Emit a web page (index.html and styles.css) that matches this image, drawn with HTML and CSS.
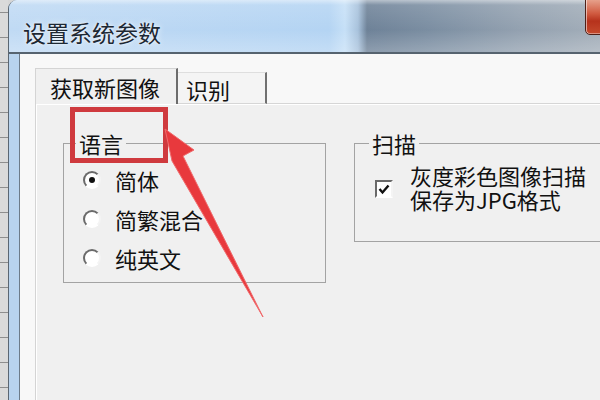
FILE: index.html
```html
<!DOCTYPE html>
<html lang="zh-CN">
<head>
<meta charset="utf-8">
<title>设置系统参数</title>
<link rel="stylesheet" href="styles.css">
</head>
<body>
<div class="screen">
  <div class="bgstrip"></div>
  <div class="window">
    <div class="titlebar">
      <span class="title">设置系统参数</span>
      <div class="close"></div>
    </div>
    <div class="frame">
      <div class="client">
        <div class="tabs">
          <div class="tab active">获取新图像</div>
          <div class="tab normal">识别</div>
          <div class="tab-fill"></div>
        </div>
        <div class="panel">
          <fieldset class="group lang">
            <legend>语言</legend>
            <div class="opt"><span class="radio on"></span>简体</div>
            <div class="opt"><span class="radio"></span>简繁混合</div>
            <div class="opt"><span class="radio"></span>纯英文</div>
          </fieldset>
          <fieldset class="group scan">
            <legend>扫描</legend>
            <div class="check-row">
              <span class="checkbox"><svg viewBox="0 0 14 14" width="14" height="14"><polyline points="2.5,7 5.5,10.5 11.5,3.5" fill="none" stroke="#111" stroke-width="2.4"/></svg></span>
              <span class="check-text"><span class="line">灰度彩色图像扫描</span><span class="line">保存为JPG格式</span></span>
            </div>
          </fieldset>
        </div>
      </div>
    </div>
  </div>
  <svg class="annot" viewBox="0 0 600 400" width="600" height="400">
    <rect x="72.5" y="109.5" width="93" height="51" fill="none" stroke="#cf3a3e" stroke-width="5"/>
    <polygon points="165,129 194,150 183,156 263,317 172,161" fill="#e8393d" stroke="#f06a6c" stroke-width="1" stroke-linejoin="round"/>
  </svg>
</div>
</body>
</html>
```

FILE: styles.css
```css
* { box-sizing: border-box; }
html, body { margin: 0; padding: 0; }
body {
  width: 600px;
  height: 400px;
  overflow: hidden;
  background: #d6d6d6;
  font-family: "Noto Sans CJK SC", "Noto Sans", sans-serif;
  color: #111;
}
.screen {
  position: relative;
  width: 600px;
  height: 400px;
  overflow: hidden;
  display: flex;
}
.bgstrip {
  flex: 0 0 8px;
  background: repeating-linear-gradient(180deg, #dadada 0 12px, #8e8e8e 12px 13px, #dadada 13px 25px);
}
.window {
  flex: 0 0 640px;
  height: 420px;
  display: flex;
  flex-direction: column;
  border-top-left-radius: 9px;
  border-left: 1px solid #5a6672;
  overflow: hidden;
  background: #b8d3ee;
}
.titlebar {
  position: relative;
  flex: none;
  height: 54px;
  display: flex;
  align-items: center;
  padding: 12px 0 0 14px;
  border-bottom: 2px solid #56636f;
  background:
    linear-gradient(180deg, rgba(255,255,255,.5) 0, rgba(255,255,255,.12) 5px, rgba(255,255,255,0) 30px, rgba(255,255,255,.2) 50px),
    linear-gradient(90deg, #c0daf4 0, #b4d4f3 320px, #c6e0f7 336px, #a8c2dc 349px, #6e8298 358px, #7b8ea2 420px, #93a1b0 510px, #a3aeb9 590px);
}
.title {
  font-size: 23px;
  line-height: 1;
  color: #1d2834;
  text-shadow: 0 0 6px rgba(255,255,255,.9), 0 0 2px rgba(255,255,255,.8);
}
.close {
  position: absolute;
  top: -1px;
  left: 576px;
  width: 60px;
  height: 36px;
  border: 1px solid #4e2018;
  border-bottom-left-radius: 5px;
  background: linear-gradient(180deg, #e6a08a 0, #d05a40 40%, #b6321c 62%, #c44a2d 100%);
  box-shadow: inset 1px 0 0 rgba(255,255,255,.55), inset 0 -1px 0 rgba(255,255,255,.4);
}
.frame {
  flex: 1;
  display: flex;
  background: #b8d3ee;
  padding-left: 10px;
}
.client {
  flex: 1;
  display: flex;
  flex-direction: column;
  background: #f8f8f8;
  border-left: 1px solid #6d7b89;
  padding: 14px 0 0 15px;
}
.tabs {
  flex: none;
  height: 36px;
  display: flex;
  align-items: flex-end;
}
.tab {
  font-size: 22px;
  line-height: 1;
  color: #111;
  display: flex;
  align-items: center;
}
.tab.active {
  width: 143px;
  height: 36px;
  border-top: 1px solid #d4d4d4;
  border-left: 1px solid #d4d4d4;
  border-right: 2px solid #6c6c6c;
  padding-left: 14px;
  background: #f0f0f0;
}
.tab.normal {
  width: 89px;
  height: 32px;
  border-top: 1px solid #dedede;
  border-right: 2px solid #707070;
  border-bottom: 1px solid #d6d6d6;
  padding-left: 8px;
  padding-top: 2px;
  background: #f4f4f4;
}
.tab-fill {
  flex: 1;
  height: 1px;
  background: #d6d6d6;
}
.panel {
  flex: 1;
  display: flex;
  align-items: flex-start;
  background: #f0f0f0;
  border-left: 1px solid #d4d4d4;
  box-shadow: inset 1px 1px 0 #fff;
  padding: 26px 0 0 27px;
}
fieldset.group {
  margin: 0;
  min-width: 0;
  flex: none;
  border: 1px solid #a3a3a3;
}
.group legend {
  font-size: 22px;
  line-height: 26px;
  padding: 0 3px;
  color: #111;
}
fieldset.lang {
  width: 263px;
  padding: 4px 0 5px 19px;
}
.lang legend { margin-left: -7px; }
.opt {
  display: flex;
  align-items: center;
  gap: 14px;
  height: 39px;
  font-size: 22px;
  line-height: 1;
}
.radio {
  position: relative;
  flex: none;
  width: 18px;
  height: 18px;
  border-radius: 50%;
  background: #fff;
  border: 2px solid;
  border-color: #6a6a6a #f4f4f4 #fff #6a6a6a;
}
.radio.on::after {
  content: "";
  position: absolute;
  left: 4px;
  top: 4px;
  width: 6px;
  height: 6px;
  border-radius: 50%;
  background: #111;
}
fieldset.scan {
  width: 280px;
  margin-left: 28px;
  padding: 7px 0 30px 20px;
}
.scan legend { margin-left: -6px; }
.check-row {
  display: flex;
  align-items: flex-start;
  gap: 17px;
}
.checkbox {
  flex: none;
  width: 18px;
  height: 18px;
  margin-top: 17px;
  display: flex;
  align-items: center;
  justify-content: center;
  background: #fff;
  border: 2px solid;
  border-color: #6a6a6a #f4f4f4 #fff #6a6a6a;
}
.check-text {
  display: flex;
  flex-direction: column;
  font-size: 22px;
  line-height: 24px;
  white-space: nowrap;
}
.annot {
  position: absolute;
  left: 0;
  top: 0;
  pointer-events: none;
}
```
